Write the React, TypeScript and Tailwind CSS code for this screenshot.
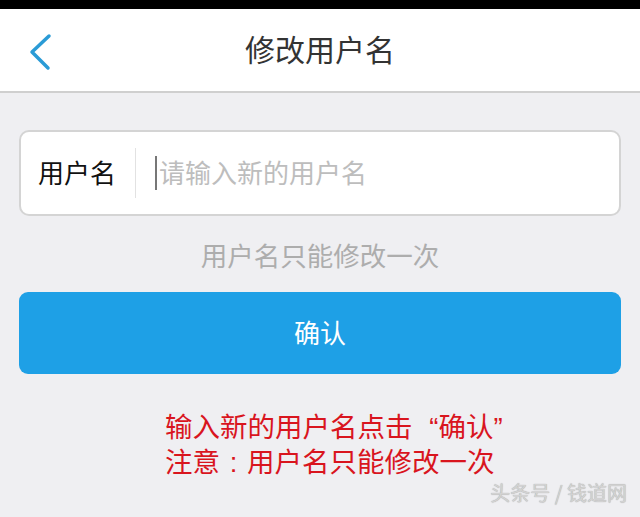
const App = () => {
  return (
    <div className="w-[640px] h-[517px] bg-[#efeff2] flex flex-col overflow-hidden font-['Noto_Sans_CJK_SC','Noto_Sans',sans-serif]">
      <div className="h-[9px] bg-black" />
      <div className="h-[84px] bg-white border-b-2 border-[#cfcfcf] relative flex items-center justify-center">
        <svg className="absolute left-[26px] top-[24px]" width="30" height="40" viewBox="0 0 30 40">
          <path d="M23 3 L6 19 L22 35" fill="none" stroke="#2a9bd6" strokeWidth="3.5" strokeLinecap="round" strokeLinejoin="round" />
        </svg>
        <h1 className="text-[30px] leading-none text-[#333] mb-[4px]">修改用户名</h1>
      </div>

      <div className="mx-[19px] mt-[37px] h-[86px] bg-white rounded-[10px] border-2 border-[#d4d4d4] flex items-center">
        <span className="ml-[17px] text-[26px] leading-none text-[#111] mb-[2px]">用户名</span>
        <div className="ml-[19px] w-px h-[50px] bg-[#e2e2e2]" />
        <div className="ml-[19px] w-[2px] h-[34px] bg-[#777]" />
        <span className="ml-[2px] text-[26px] leading-none text-[#bdbdbd] mb-[2px]">请输入新的用户名</span>
      </div>

      <p className="mt-[26px] text-center text-[26.5px] leading-none text-[#adadad]">用户名只能修改一次</p>

      <div className="mx-[19px] mt-[23px] h-[82px] bg-[#1ea0e6] rounded-[9px] flex items-center justify-center">
        <span className="text-[26px] leading-none text-white mb-[1px]">确认</span>
      </div>

      {/* red note: Liberation first so line boxes stay tight, CJK glyphs fall back */}
      <div className="ml-[165px] mt-[40px] flex flex-col gap-[8px] text-[27.5px] leading-none text-[#d9151e] font-['Liberation_Sans','Noto_Sans_CJK_SC',sans-serif]">
        <p>
          输入新的用户名点击<span className="inline-block w-[26px] text-right">“</span>确认<span className="inline-block w-[14px]">”</span>
        </p>
        <p>
          注意<span className="inline-block w-[27px] text-center">:</span>用户名只能修改一次
        </p>
      </div>

      <div className="flex justify-end pr-[13px] mt-[6px]">
        <span className="text-[20px] leading-none text-[#d2d2d2] [text-shadow:0_0_1px_#9a9a9a]">头条号 / 钱道网</span>
      </div>
    </div>
  );
};

export default App;
